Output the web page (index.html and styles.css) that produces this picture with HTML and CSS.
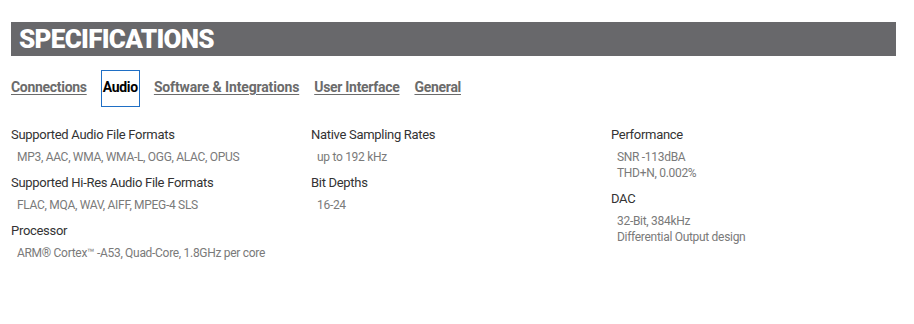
FILE: index.html
```html
<!DOCTYPE html>
<html lang="en">

<head>
    <meta charset="UTF-8">
    <meta name="viewport" content="width=device-width, initial-scale=1.0">
    <title>Specifications</title>
    <link rel="stylesheet" href="styles.css">
</head>

<body>
    <div class="specs">
        <!-- Title bar -->
        <div class="specs-header">
            <h2>SPECIFICATIONS</h2>
        </div>

        <!-- Tabs -->
        <div class="tabs">
            <a href="#" class="tab">Connections</a>
            <a href="#" class="tab active">Audio</a>
            <a href="#" class="tab tab-wide">Software &amp; Integrations</a>
            <a href="#" class="tab tab-spaced">User Interface</a>
            <a href="#" class="tab tab-spaced">General</a>
        </div>

        <!-- Audio specs -->
        <div class="spec-grid">
            <div class="spec-col">
                <div class="spec-item">
                    <div class="spec-label">Supported Audio File Formats</div>
                    <div class="spec-value">MP3, AAC, WMA, WMA-L, OGG, ALAC, OPUS</div>
                </div>
                <div class="spec-item">
                    <div class="spec-label">Supported Hi-Res Audio File Formats</div>
                    <div class="spec-value">FLAC, MQA, WAV, AIFF, MPEG-4 SLS</div>
                </div>
                <div class="spec-item">
                    <div class="spec-label">Processor</div>
                    <div class="spec-value">ARM® Cortex™ -A53, Quad-Core, 1.8GHz per core</div>
                </div>
            </div>
            <div class="spec-col">
                <div class="spec-item">
                    <div class="spec-label">Native Sampling Rates</div>
                    <div class="spec-value">up to 192 kHz</div>
                </div>
                <div class="spec-item">
                    <div class="spec-label">Bit Depths</div>
                    <div class="spec-value">16-24</div>
                </div>
            </div>
            <div class="spec-col">
                <div class="spec-item">
                    <div class="spec-label">Performance</div>
                    <div class="spec-value">SNR -113dBA<br>THD+N, 0.002%</div>
                </div>
                <div class="spec-item">
                    <div class="spec-label">DAC</div>
                    <div class="spec-value">32-Bit, 384kHz<br>Differential Output design</div>
                </div>
            </div>
        </div>
    </div>
</body>

</html>
```

FILE: styles.css
```css
/* General */
body,
html {
    margin: 0;
    padding: 0;
    background: #fff;
    font-family: Roboto, 'Liberation Sans', sans-serif;
}

.specs {
    padding: 22px 18px 0 11px;
}

/* Title bar */
.specs-header {
    background-color: #68686b;
    height: 34px;
    display: flex;
    align-items: center;
    padding-left: 8px;
}

.specs-header h2 {
    margin: 0;
    color: #fff;
    font-size: 26px;
    font-weight: 900;
    letter-spacing: -0.7px;
    line-height: 1;
}

/* Tabs */
.tabs {
    display: flex;
    align-items: baseline;
    gap: 14px;
    margin-top: 14px;
    height: 37px;
}

.tab {
    color: #6b6b6b;
    font-size: 14px;
    font-weight: 700;
    letter-spacing: -0.3px;
    text-decoration: underline;
    text-underline-offset: 2px;
}

.tab-wide {
    letter-spacing: -0.15px;
}

.tab-spaced {
    margin-left: 1px;
}

.tab.active {
    color: #000;
    text-decoration: none;
    border: 1.5px solid #1f6fc5;
    padding: 8px 1px 11px;
}

/* Spec grid */
.spec-grid {
    display: grid;
    grid-template-columns: 300px 300px 1fr;
    margin-top: 19px;
}

.spec-item {
    margin-bottom: 9px;
}

.spec-label {
    color: #333;
    font-size: 13px;
    letter-spacing: -0.3px;
    line-height: 17px;
}

.spec-value {
    color: #7a7a7a;
    font-size: 12px;
    letter-spacing: -0.3px;
    line-height: 16px;
    padding-left: 6px;
    margin-top: 6px;
}
```
